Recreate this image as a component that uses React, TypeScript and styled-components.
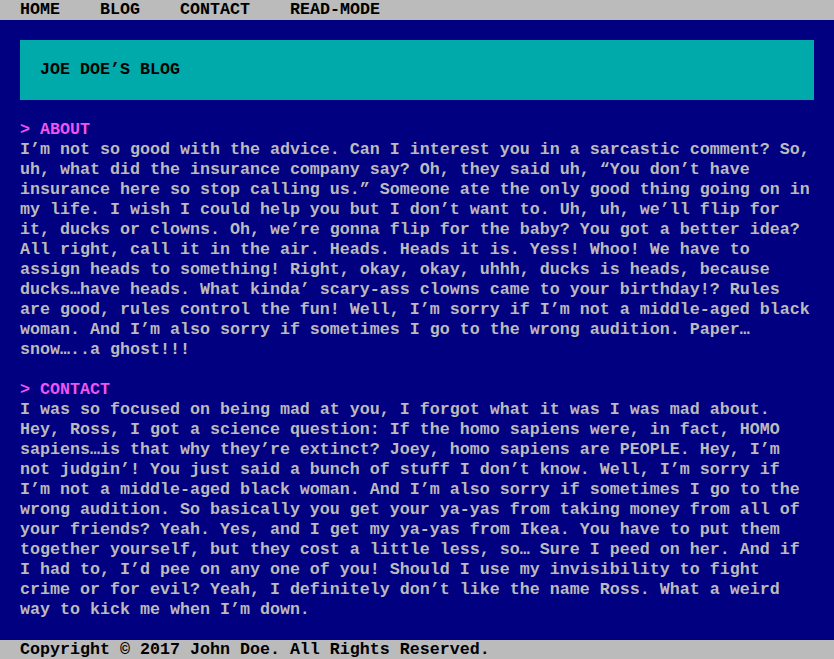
import React from "react";
import styled, { createGlobalStyle } from "styled-components";

const GlobalStyle = createGlobalStyle`
  html, body {
    margin: 0;
    padding: 0;
    background: #000080;
  }
  body {
    font-family: "Liberation Mono", "DejaVu Sans Mono", monospace;
    font-size: 16.66px;
    font-weight: bold;
    line-height: 20px;
    color: #bbbbbb;
  }
  * { box-sizing: border-box; }
`;

const Page = styled.div`
  min-height: 659px;
  display: flex;
  flex-direction: column;
  background: #000080;
`;

const NavBar = styled.nav`
  background: #bbbbbb;
  height: 20px;
  padding: 0 20px;
  display: flex;
  gap: 40px;
`;

const NavLink = styled.a`
  color: #000000;
  text-decoration: none;
  line-height: 20px;
`;

const Main = styled.main`
  flex: 1;
  padding: 20px 20px 20px 20px;
`;

const Header = styled.header`
  background: #00aaaa;
  color: #000000;
  padding: 20px;
  margin-bottom: 20px;
`;

const Title = styled.h1`
  margin: 0;
  font-size: inherit;
  line-height: 20px;
`;

const Section = styled.section`
  & + & {
    margin-top: 20px;
  }
`;

const SectionTitle = styled.h2`
  margin: 0;
  font-size: inherit;
  line-height: 20px;
  color: #ee55ee;
`;

const Paragraph = styled.p`
  margin: 0;
`;

const Footer = styled.footer`
  background: #bbbbbb;
  color: #000000;
  height: 20px;
  padding: 0 20px;
  line-height: 20px;
`;

const about =
  "I’m not so good with the advice. Can I interest you in a sarcastic comment? So, uh, what did the insurance company say? Oh, they said uh, “You don’t have insurance here so stop calling us.” Someone ate the only good thing going on in my life. I wish I could help you but I don’t want to. Uh, uh, we’ll flip for it, ducks or clowns. Oh, we’re gonna flip for the baby? You got a better idea? All right, call it in the air. Heads. Heads it is. Yess! Whoo! We have to assign heads to something! Right, okay, okay, uhhh, ducks is heads, because ducks…have heads. What kinda’ scary-ass clowns came to your birthday!? Rules are good, rules control the fun! Well, I’m sorry if I’m not a middle-aged black woman. And I’m also sorry if sometimes I go to the wrong audition. Paper… snow…..a ghost!!!";

const contact =
  "I was so focused on being mad at you, I forgot what it was I was mad about. Hey, Ross, I got a science question: If the homo sapiens were, in fact, HOMO sapiens…is that why they’re extinct? Joey, homo sapiens are PEOPLE. Hey, I’m not judgin’! You just said a bunch of stuff I don’t know. Well, I’m sorry if I’m not a middle-aged black woman. And I’m also sorry if sometimes I go to the wrong audition. So basically you get your ya-yas from taking money from all of your friends? Yeah. Yes, and I get my ya-yas from Ikea. You have to put them together yourself, but they cost a little less, so… Sure I peed on her. And if I had to, I’d pee on any one of you! Should I use my invisibility to fight crime or for evil? Yeah, I definitely don’t like the name Ross. What a weird way to kick me when I’m down.";

export default function App() {
  return (
    <>
      <GlobalStyle />
      <Page>
        <NavBar>
          <NavLink href="#">HOME</NavLink>
          <NavLink href="#">BLOG</NavLink>
          <NavLink href="#">CONTACT</NavLink>
          <NavLink href="#">READ-MODE</NavLink>
        </NavBar>
        <Main>
          <Header>
            <Title>JOE DOE’S BLOG</Title>
          </Header>
          <Section>
            <SectionTitle>&gt; ABOUT</SectionTitle>
            <Paragraph>{about}</Paragraph>
          </Section>
          <Section>
            <SectionTitle>&gt; CONTACT</SectionTitle>
            <Paragraph>{contact}</Paragraph>
          </Section>
        </Main>
        <Footer>Copyright © 2017 John Doe. All Rights Reserved.</Footer>
      </Page>
    </>
  );
}
